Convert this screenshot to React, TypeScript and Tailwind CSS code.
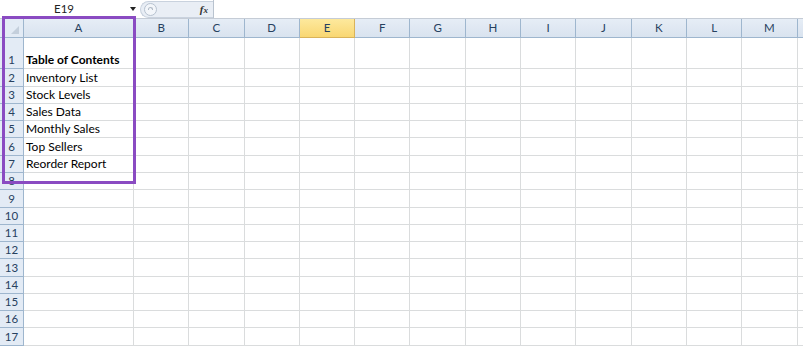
import React from "react";

const columns = ["A", "B", "C", "D", "E", "F", "G", "H", "I", "J", "K", "L", "M", ""];
const rows = Array.from({ length: 17 }, (_, i) => i + 1);
const contents: Record<number, { text: string; bold?: boolean }> = {
  1: { text: "Table of Contents", bold: true },
  2: { text: "Inventory List" },
  3: { text: "Stock Levels" },
  4: { text: "Sales Data" },
  5: { text: "Monthly Sales" },
  6: { text: "Top Sellers" },
  7: { text: "Reorder Report" },
};

export default function App() {
  return (
    <div className="relative w-[803px] h-[347px] overflow-hidden bg-white font-['Lato','Open_Sans',sans-serif] text-[12px] text-black">
      {/* Formula bar */}
      <div className="flex h-[19px] items-center border-b border-[#c5ccd6] bg-white">
        <div className="flex w-[140px] items-center">
          <span className="ml-[54px] text-[11.5px] text-[#222]">E19</span>
          <span className="ml-auto mr-[4px] h-0 w-0 border-x-[3px] border-t-[4px] border-x-transparent border-t-[#222]" />
        </div>
        <div className="flex h-[17px] w-[73px] items-center rounded-l-full border border-r-0 border-[#c9d2de] bg-[#e9eef5]">
          <span className="ml-[3px] flex h-[13px] w-[13px] items-start justify-center rounded-full border border-[#b7c2d0] bg-[#f3f6fa]">
            <span className="mt-[3px] h-[3px] w-[5px] rounded-t-full border-x border-t border-[#b0b9c5]" />
          </span>
          <span className="ml-auto mr-[5px] font-['Liberation_Serif',serif] text-[11px] font-bold italic text-[#333]">
            f<span className="text-[9px]">x</span>
          </span>
        </div>
        <div className="h-full w-px bg-[#b9c3cf]" />
      </div>

      {/* Sheet grid */}
      <div className="grid grid-cols-[24px_110px_repeat(13,55.3px)] grid-rows-[19px_31.4px_repeat(16,17.27px)]">
        <div className="flex items-end justify-end border-r border-b border-[#9eb6ce] bg-[#e3ebf5] pb-[3px] pr-[4px]">
          <span className="h-0 w-0 border-l-[8px] border-l-transparent [border-bottom:8px_solid_#c4cfdc]" />
        </div>
        {columns.map((c, i) => (
          <div
            key={i}
            className={
              c === "E"
                ? "flex items-center justify-center border-r border-b border-[#d9b35a] bg-gradient-to-b from-[#fde99d] to-[#f9d772] text-[11.5px] text-[#27415f]"
                : "flex items-center justify-center border-r border-b border-[#9eb6ce] bg-gradient-to-b from-[#e6edf6] to-[#d9e3ef] text-[11.5px] text-[#27415f]"
            }
          >
            {c}
          </div>
        ))}
        {rows.map((r) => (
          <React.Fragment key={r}>
            <div className="flex items-end justify-center border-r border-b border-[#9eb6ce] bg-[#e3ebf5] text-[11.5px] leading-[16px] text-[#27415f]">
              {r}
            </div>
            {columns.map((c, i) => (
              <div
                key={i}
                className="flex items-end overflow-visible whitespace-nowrap border-r border-b border-[#dadcdd] leading-[16px]"
              >
                {c === "A" && contents[r] ? (
                  <span className={contents[r].bold ? "pl-[2px] font-bold" : "pl-[2px]"}>{contents[r].text}</span>
                ) : null}
              </div>
            ))}
          </React.Fragment>
        ))}
      </div>

      {/* Highlight box */}
      <div className="pointer-events-none absolute left-[2px] top-[16px] h-[168px] w-[134px] border-[3px] border-[#8a4bc2]" />
    </div>
  );
}
